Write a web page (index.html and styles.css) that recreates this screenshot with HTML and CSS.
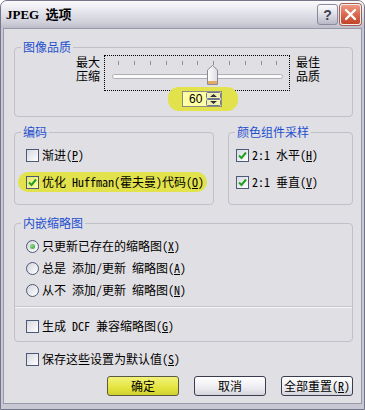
FILE: index.html
```html
<!DOCTYPE html>
<html lang="zh-CN">
<head>
    <meta charset="UTF-8">
    <title>JPEG 选项</title>
    <link rel="stylesheet" href="styles.css">
</head>
<body>
<div class="window">
    <div class="titlebar">
        <span class="title">JPEG&nbsp;选项</span>
        <span class="tbtn help">?</span>
        <span class="tbtn close">
            <svg width="13" height="13" viewBox="0 0 13 13"><path d="M2 2 L11 11 M11 2 L2 11" stroke="#fff" stroke-width="2.4" stroke-linecap="round"/></svg>
        </span>
    </div>

    <div class="client">
        <fieldset class="group">
            <legend>图像品质</legend>
            <div class="slider-row">
                <div class="side-label">最大<br>压缩</div>
                <div class="slider">
                    <svg width="184" height="34" viewBox="0 0 184 34">
                        <g stroke="#8c8c96" stroke-width="1">
                            <path d="M13.5 5 V9 M29.5 5 V9 M45.5 5 V9 M61.5 5 V9 M77.5 5 V9 M92.5 5 V9 M108.5 5 V9 M124.5 5 V9 M140.5 5 V9 M156.5 5 V9 M171.5 5 V9"/>
                        </g>
                        <rect x="7.5" y="18.5" width="170" height="4" rx="2" fill="#fbfbfb" stroke="#aeaeb8"/>
                        <defs>
                            <linearGradient id="thumb" x1="0" y1="0" x2="1" y2="0">
                                <stop offset="0" stop-color="#ffffff"/>
                                <stop offset="1" stop-color="#dcdce2"/>
                            </linearGradient>
                        </defs>
                        <polygon points="102.5,14 107.5,9.5 112.5,14 112.5,28.5 102.5,28.5" fill="url(#thumb)" stroke="#8a8a96"/>
                        <rect x="103" y="25" width="9" height="3" fill="#e2ac62"/>
                    </svg>
                </div>
                <div class="side-label">最佳<br>品质</div>
            </div>
            <div class="spin-row">
                <span class="spin-mark">
                    <span class="spin">
                        <span class="spin-val">60</span>
                        <svg class="spin-btns" width="15" height="14" viewBox="0 0 15 14">
                            <rect x="0.5" y="0.5" width="14" height="6" rx="1" fill="#f4f4b0" stroke="#6d7890"/>
                            <rect x="0.5" y="7.5" width="14" height="6" rx="1" fill="#f4f4b0" stroke="#6d7890"/>
                            <path d="M4 5 L7.5 2 L11 5 Z M4 9 L7.5 12 L11 9 Z" fill="#2c2c3c"/>
                        </svg>
                    </span>
                </span>
            </div>
        </fieldset>

        <div class="group-row">
            <fieldset class="group encode">
                <legend>编码</legend>
                <div class="opts">
                    <div class="row"><span class="check"></span>渐进(<u>P</u>)</div>
                    <div class="row marked"><span class="check on"><svg width="11" height="11" viewBox="0 0 11 11"><path d="M2 5.5 L4.5 8 L9 2.5" fill="none" stroke="#21a121" stroke-width="2"/></svg></span>优化 Huffman(霍夫曼)代码(<u>O</u>)</div>
                </div>
            </fieldset>
            <fieldset class="group sampling">
                <legend>颜色组件采样</legend>
                <div class="opts">
                    <div class="row"><span class="check"><svg width="11" height="11" viewBox="0 0 11 11"><path d="M2 5.5 L4.5 8 L9 2.5" fill="none" stroke="#21a121" stroke-width="2"/></svg></span>2:1 水平(<u>H</u>)</div>
                    <div class="row"><span class="check"><svg width="11" height="11" viewBox="0 0 11 11"><path d="M2 5.5 L4.5 8 L9 2.5" fill="none" stroke="#21a121" stroke-width="2"/></svg></span>2:1 垂直(<u>V</u>)</div>
                </div>
            </fieldset>
        </div>

        <fieldset class="group thumbs">
            <legend>内嵌缩略图</legend>
            <div class="radios">
                <div class="rrow"><span class="radio on"></span>只更新已存在的缩略图(<u>X</u>)</div>
                <div class="rrow"><span class="radio"></span>总是 添加/更新 缩略图(<u>A</u>)</div>
                <div class="rrow"><span class="radio"></span>从不 添加/更新 缩略图(<u>N</u>)</div>
            </div>
            <div class="sep"></div>
            <div class="row dcf"><span class="check"></span>生成 DCF 兼容缩略图(<u>G</u>)</div>
        </fieldset>

        <div class="row save"><span class="check"></span>保存这些设置为默认值(<u>S</u>)</div>

        <div class="buttons">
            <button class="btn ok">确定</button>
            <button class="btn">取消</button>
            <button class="btn">全部重置(<u>R</u>)</button>
        </div>
    </div>
</div>
</body>
</html>
```

FILE: styles.css
```css
* { box-sizing: border-box; }

body {
    margin: 0;
    background: #ffffff;
    font-family: "Noto Sans Mono CJK SC", "Noto Sans CJK SC", sans-serif;
    font-size: 12px;
    line-height: 14px;
    color: #000;
}

.window {
    width: 365px;
    height: 410px;
    display: flex;
    flex-direction: column;
    background: #c8c8d4;
    border: 1px solid #76768a;
    border-radius: 7px 7px 0 0;
}

/* barra de titulo */
.titlebar {
    height: 27px;
    flex: none;
    display: flex;
    align-items: center;
    padding: 0 3px 0 5px;
    background: linear-gradient(#fbfbfd, #e2e2ea 45%, #cfcfda 80%, #bdbdca);
    border-radius: 6px 6px 0 0;
}
.title {
    flex: 1;
    font-family: "Liberation Serif", "Noto Sans CJK SC", serif;
    font-weight: bold;
    font-size: 13px;
    word-spacing: 3px;
}
.tbtn {
    width: 21px;
    height: 21px;
    margin-left: 2px;
    display: flex;
    align-items: center;
    justify-content: center;
    border-radius: 3px;
}
.help {
    border: 1px solid #8a8a9c;
    background: linear-gradient(#fdfdff, #d6d6e0 60%, #b8b8c8);
    color: #404050;
    font-family: "Liberation Sans", sans-serif;
    font-weight: bold;
    font-size: 14px;
}
.close {
    border: 1px solid #f0f0f4;
    background: linear-gradient(#ee9a84, #d8644a 55%, #c04428);
    box-shadow: 0 0 0 1px #a86050;
}

.client {
    flex: 1;
    margin: 0 2px 5px;
    padding: 11px 8px 0 10px;
    background: #e0dfe3;
    border: 1px solid #9898a8;
}

/* grupos */
.group {
    margin: 0;
    padding: 0;
    min-width: 0;
    border: 1px solid #c0c0c8;
    border-radius: 4px;
}
.group legend {
    margin-left: 6px;
    padding: 0 2px;
    color: #1e4fcf;
    font-size: 12px;
    line-height: 14px;
}

.slider-row {
    display: flex;
    padding: 1px 0 0 61px;
}
.side-label {
    width: 24px;
    line-height: 14px;
    text-align: right;
}
.slider {
    width: 186px;
    height: 36px;
    margin: 0 6px 0 4px;
    border: 1px dotted #000;
}
.slider svg { display: block; }

.spin-row {
    display: flex;
    padding: 0 0 9px 153px;
}
.spin-mark {
    display: flex;
    margin: -4px 0;
    padding: 4px 16px 4px 14px;
    background: #e2e24c;
    border-radius: 11px;
}
.spin {
    width: 40px;
    height: 16px;
    display: flex;
    align-items: center;
    border: 1px solid #8c8c84;
    background: #ffffa4;
}
.spin-val {
    flex: 1;
    padding-left: 6px;
    font-family: "Liberation Sans", sans-serif;
}

.group-row {
    display: flex;
    gap: 14px;
    margin-top: 8px;
}
.encode { width: 200px; flex: none; }
.sampling { flex: 1; }

.opts {
    display: flex;
    flex-direction: column;
    align-items: flex-start;
    padding: 7px 0 13px 11px;
}
.sampling .opts { padding-left: 7px; }

.row {
    display: flex;
    align-items: center;
    height: 18px;
    white-space: nowrap;
}
.row + .row { margin-top: 9px; }
.row.marked {
    height: 20px;
    margin: 8px 0 -1px -8px;
    padding: 0 3px 0 8px;
    background: #e2e24c;
    border-radius: 10px;
}

.check {
    width: 13px;
    height: 13px;
    margin-right: 3px;
    display: flex;
    align-items: center;
    justify-content: center;
    border: 1px solid #4a5a78;
    background: linear-gradient(135deg, #d8d8e0, #ffffff);
}
.check.on { background: linear-gradient(135deg, #e6e66a, #ffffb0); }

.thumbs { margin-top: 11px; }
.radios {
    padding: 5px 0 0 11px;
}
.rrow {
    display: flex;
    align-items: center;
    height: 22px;
    white-space: nowrap;
}
.radio {
    width: 13px;
    height: 13px;
    margin-right: 3px;
    border-radius: 50%;
    border: 1px solid #4a5a78;
    background: linear-gradient(135deg, #d4d4dc, #ffffff);
    display: flex;
    align-items: center;
    justify-content: center;
}
.radio.on::after {
    content: "";
    width: 5px;
    height: 5px;
    border-radius: 50%;
    background: radial-gradient(circle at 35% 35%, #8ade8a, #2f9a2f);
}

.sep {
    margin-top: 5px;
    border-top: 1px solid #c4c4cc;
    border-bottom: 1px solid #f8f8fa;
}
.dcf {
    margin: 9px 0 6px 11px;
}

.save {
    margin: 8px 0 0 12px;
}

.buttons {
    display: flex;
    justify-content: flex-end;
    gap: 15px;
    margin-top: 8px;
}
.btn {
    width: 72px;
    height: 20px;
    padding: 0;
    font: inherit;
    color: #000;
    border: 1px solid #3c3c50;
    border-radius: 3px;
    background: linear-gradient(#ffffff, #eeeef2 55%, #d4d4dc);
}
.btn.ok {
    background: linear-gradient(#f2f27a, #e4e440 60%, #d0d030);
    border-color: #5a5a40;
}
```
